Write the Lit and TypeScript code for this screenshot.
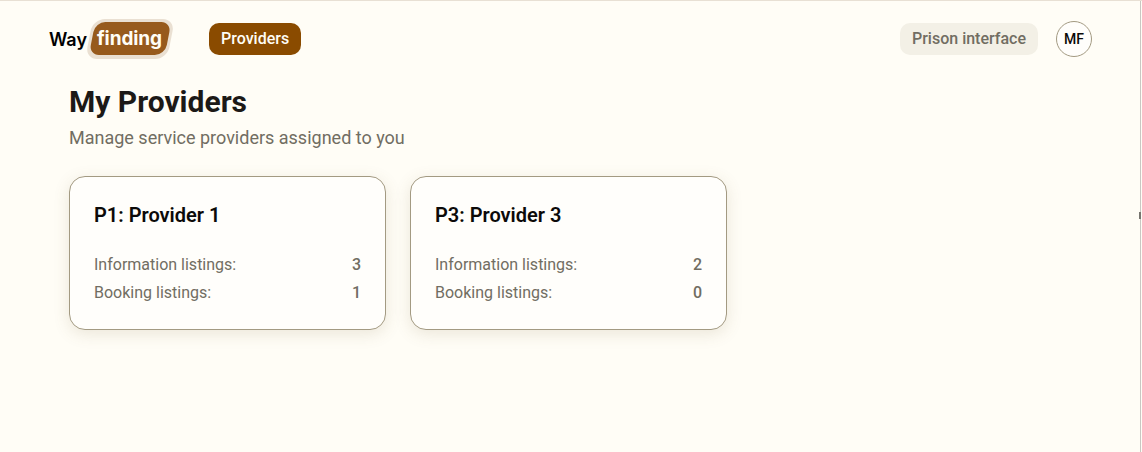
import { LitElement, html, css } from 'lit';
import { customElement } from 'lit/decorators.js';

const providers = [
  { name: 'P1: Provider 1', info: 3, booking: 1 },
  { name: 'P3: Provider 3', info: 2, booking: 0 },
];

@customElement('app-root')
export class AppRoot extends LitElement {
  static styles = css`
    :host {
      display: block;
      position: relative;
      height: 452px;
      overflow: hidden;
      background: #fffdf6;
      color: #1c1917;
      font-family: Roboto, sans-serif;
      border-top: 1px solid #e8e0d4;
      box-sizing: border-box;
    }

    .edge {
      position: absolute;
      top: 0;
      right: 1px;
      bottom: 0;
      width: 1px;
      background: #c9c7c2;
    }

    .notch {
      position: absolute;
      top: 211px;
      right: 1px;
      width: 2px;
      height: 7px;
      background: #77756f;
    }

    header {
      display: flex;
      align-items: center;
      height: 76px;
      padding: 0 50px 0 49px;
    }

    .logo {
      display: flex;
      align-items: center;
      width: 160px;
      font-family: Inter, sans-serif;
      font-size: 18px;
      font-weight: 600;
      color: #000;
    }

    .logo-mark {
      display: block;
      margin-left: 2px;
      padding: 3px 3px 4px;
      background: #eae0d2;
      border-radius: 12px;
      transform: skewX(-11deg);
    }

    .logo-mark span {
      display: block;
      height: 33px;
      line-height: 34px;
      padding: 0 6px 0 5px;
      background: #975a1c;
      border-radius: 10px;
      color: #fffdf6;
    }

    .logo-mark b {
      display: block;
      font-size: 19px;
      font-weight: 700;
      letter-spacing: -0.1px;
      transform: skewX(11deg);
    }

    .nav-link {
      padding: 0 12px;
      height: 32px;
      line-height: 31px;
      border-radius: 10px;
      background: #8a4b00;
      color: #fffdf6;
      font-size: 16px;
      font-weight: 500;
    }

    .right {
      display: flex;
      align-items: center;
      gap: 18px;
      margin-left: auto;
    }

    .interface {
      padding: 0 12px;
      height: 32px;
      line-height: 31px;
      border-radius: 10px;
      background: #f3f0e6;
      color: #716d62;
      font-size: 16px;
      font-weight: 500;
    }

    .avatar {
      display: flex;
      align-items: center;
      justify-content: center;
      width: 36px;
      height: 36px;
      box-sizing: border-box;
      border: 1px solid #a39a82;
      border-radius: 50%;
      background: #fffefb;
      color: #0c0a09;
      font-size: 14px;
      font-weight: 500;
    }

    main {
      padding: 7px 0 0 69px;
    }

    h1 {
      margin: 0;
      font-size: 30px;
      line-height: 36px;
      font-weight: 700;
    }

    .sub {
      margin: 6px 0 0;
      font-size: 18px;
      line-height: 24px;
      color: #716d62;
    }

    .cards {
      display: flex;
      gap: 24px;
      margin-top: 26px;
    }

    .card {
      width: 317px;
      height: 154px;
      box-sizing: border-box;
      padding: 24px;
      background: #fffefb;
      border: 1px solid #a39a82;
      border-radius: 16px;
      box-shadow: 0 4px 16px rgba(120, 100, 60, 0.15);
    }

    h2 {
      margin: 0 0 22px;
      font-size: 20px;
      line-height: 28px;
      font-weight: 600;
      color: #0c0a09;
    }

    .row {
      display: flex;
      justify-content: space-between;
      height: 28px;
      line-height: 28px;
      font-size: 16px;
      color: #716d62;
    }

    .row strong {
      font-weight: 500;
    }
  `;

  render() {
    return html`
      <header>
        <div class="logo">
          Way
          <span class="logo-mark"><span><b>finding</b></span></span>
        </div>
        <div class="nav-link">Providers</div>
        <div class="right">
          <div class="interface">Prison interface</div>
          <div class="avatar">MF</div>
        </div>
      </header>
      <main>
        <h1>My Providers</h1>
        <p class="sub">Manage service providers assigned to you</p>
        <div class="cards">
          ${providers.map(
            (p) => html`
              <div class="card">
                <h2>${p.name}</h2>
                <div class="row"><span>Information listings:</span><strong>${p.info}</strong></div>
                <div class="row"><span>Booking listings:</span><strong>${p.booking}</strong></div>
              </div>
            `
          )}
        </div>
      </main>
      <div class="edge"></div>
      <div class="notch"></div>
    `;
  }
}
